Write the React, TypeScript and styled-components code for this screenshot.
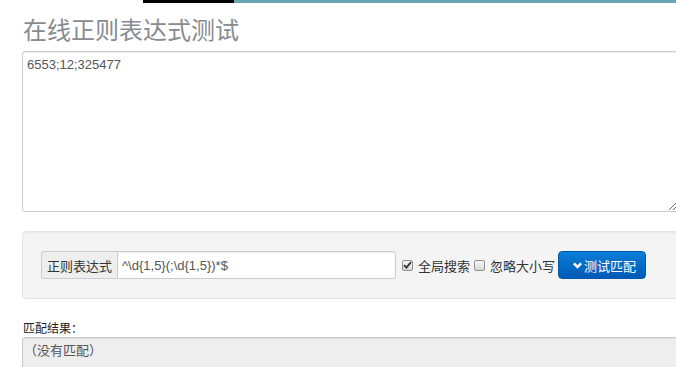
import React from "react";
import styled, { createGlobalStyle } from "styled-components";

const GlobalStyle = createGlobalStyle`
  html, body {
    margin: 0;
    padding: 0;
    overflow: hidden;
    background: #fff;
  }
  body {
    font-family: "Liberation Sans", "Noto Sans CJK SC", Arial, sans-serif;
    font-size: 13px;
    color: #333;
  }
`;

const TopBar = styled.div`
  display: flex;
  height: 3px;
`;

const BarPart = styled.div<{ $w?: number; $color: string }>`
  background: ${(p) => p.$color};
  ${(p) => (p.$w ? `width: ${p.$w}px;` : "flex: 1;")}
`;

const Page = styled.div`
  width: 656px;
  padding-left: 22px;
`;

const Title = styled.h1`
  margin: 13px 0 9px 1px;
  font-family: "Noto Sans CJK SC", sans-serif;
  font-weight: 400;
  font-size: 24px;
  line-height: 26px;
  color: #878c91;
`;

const Source = styled.textarea`
  display: block;
  box-sizing: border-box;
  width: 100%;
  height: 161px;
  margin: 0;
  padding: 5px 4px;
  border: 1px solid #ccc;
  border-radius: 3px;
  box-shadow: inset 0 1px 1px rgba(0, 0, 0, 0.075);
  font-family: "Liberation Sans", Arial, sans-serif;
  font-size: 13px;
  line-height: 16px;
  color: #555;
  resize: both;
  outline: none;
`;

const Well = styled.div`
  display: flex;
  align-items: center;
  box-sizing: border-box;
  margin-top: 19px;
  height: 68px;
  padding: 0 18px;
  background: #f4f4f4;
  border: 1px solid #e3e3e3;
  border-radius: 4px;
  box-shadow: inset 0 1px 1px rgba(0, 0, 0, 0.04);
`;

const InputGroup = styled.div`
  display: flex;
  height: 28px;
`;

const Addon = styled.span`
  display: flex;
  align-items: center;
  padding: 0 5px;
  background: #eee;
  border: 1px solid #ccc;
  border-right: 0;
  border-radius: 3px 0 0 3px;
  font-family: "Noto Sans CJK SC", sans-serif;
  font-size: 13px;
  color: #333;
`;

const Pattern = styled.input`
  box-sizing: border-box;
  width: 279px;
  height: 28px;
  margin: 0;
  padding: 0 4px;
  border: 1px solid #ccc;
  border-radius: 0 3px 3px 0;
  box-shadow: inset 0 1px 1px rgba(0, 0, 0, 0.075);
  font-family: "Liberation Sans", Arial, sans-serif;
  font-size: 13px;
  color: #555;
  outline: none;
`;

const Option = styled.label<{ $gap: number }>`
  display: flex;
  align-items: center;
  margin-left: ${(p) => p.$gap}px;
  font-family: "Noto Sans CJK SC", sans-serif;
  font-size: 13px;
  color: #333;
`;

const Box = styled.span`
  display: flex;
  align-items: center;
  justify-content: center;
  box-sizing: border-box;
  width: 11px;
  height: 11px;
  margin-right: 5px;
  border: 1px solid #8f8f8f;
  border-radius: 2px;
  background: linear-gradient(#f6f6f6, #d9d9d9);
`;

const Button = styled.button`
  display: flex;
  align-items: center;
  gap: 2px;
  box-sizing: border-box;
  height: 28px;
  width: 88px;
  margin-left: 3px;
  padding: 0 0 0 14px;
  border: 1px solid #0257a8;
  border-radius: 4px;
  background: linear-gradient(#0a7fd8, #0059b7);
  color: #fff;
  font-family: "Noto Sans CJK SC", sans-serif;
  font-size: 13px;
`;

const ResultLabel = styled.div`
  margin: 20px 0 0 1px;
  font-family: "Noto Sans CJK SC", sans-serif;
  font-size: 12px;
  line-height: 18px;
  color: #222;
`;

const Result = styled.div`
  box-sizing: border-box;
  height: 60px;
  padding: 3px 1px;
  background: #eee;
  border: 1px solid #c8c8c8;
  border-radius: 3px;
  box-shadow: inset 0 1px 1px rgba(0, 0, 0, 0.06);
  font-family: "Noto Sans CJK SC", sans-serif;
  font-size: 13px;
  line-height: 18px;
  color: #555;
`;

const Check = () => (
  <svg width="9" height="8" viewBox="0 0 9 8">
    <path d="M1 4.2 L3.4 6.6 L8 1.2" fill="none" stroke="#333" strokeWidth="1.8" />
  </svg>
);

const Chevron = () => (
  <svg width="9" height="7" viewBox="0 0 9 7">
    <path d="M0 2.3 L1.8 0.5 L4.5 3.2 L7.2 0.5 L9 2.3 L4.5 6.8 Z" fill="#fff" />
  </svg>
);

const App = () => (
  <>
    <GlobalStyle />
    <TopBar>
      <BarPart $w={143} $color="#fff" />
      <BarPart $w={91} $color="#000" />
      <BarPart $color="#6aa5b6" />
    </TopBar>
    <Page>
      <Title>在线正则表达式测试</Title>
      <Source defaultValue="6553;12;325477" spellCheck={false} />
      <Well>
        <InputGroup>
          <Addon>正则表达式</Addon>
          <Pattern defaultValue="^\d{1,5}(;\d{1,5})*$" spellCheck={false} />
        </InputGroup>
        <Option $gap={6}>
          <Box>
            <Check />
          </Box>
          全局搜索
        </Option>
        <Option $gap={4}>
          <Box />
          忽略大小写
        </Option>
        <Button>
          <Chevron />
          测试匹配
        </Button>
      </Well>
      <ResultLabel>匹配结果：</ResultLabel>
      <Result>（没有匹配）</Result>
    </Page>
  </>
);

export default App;
